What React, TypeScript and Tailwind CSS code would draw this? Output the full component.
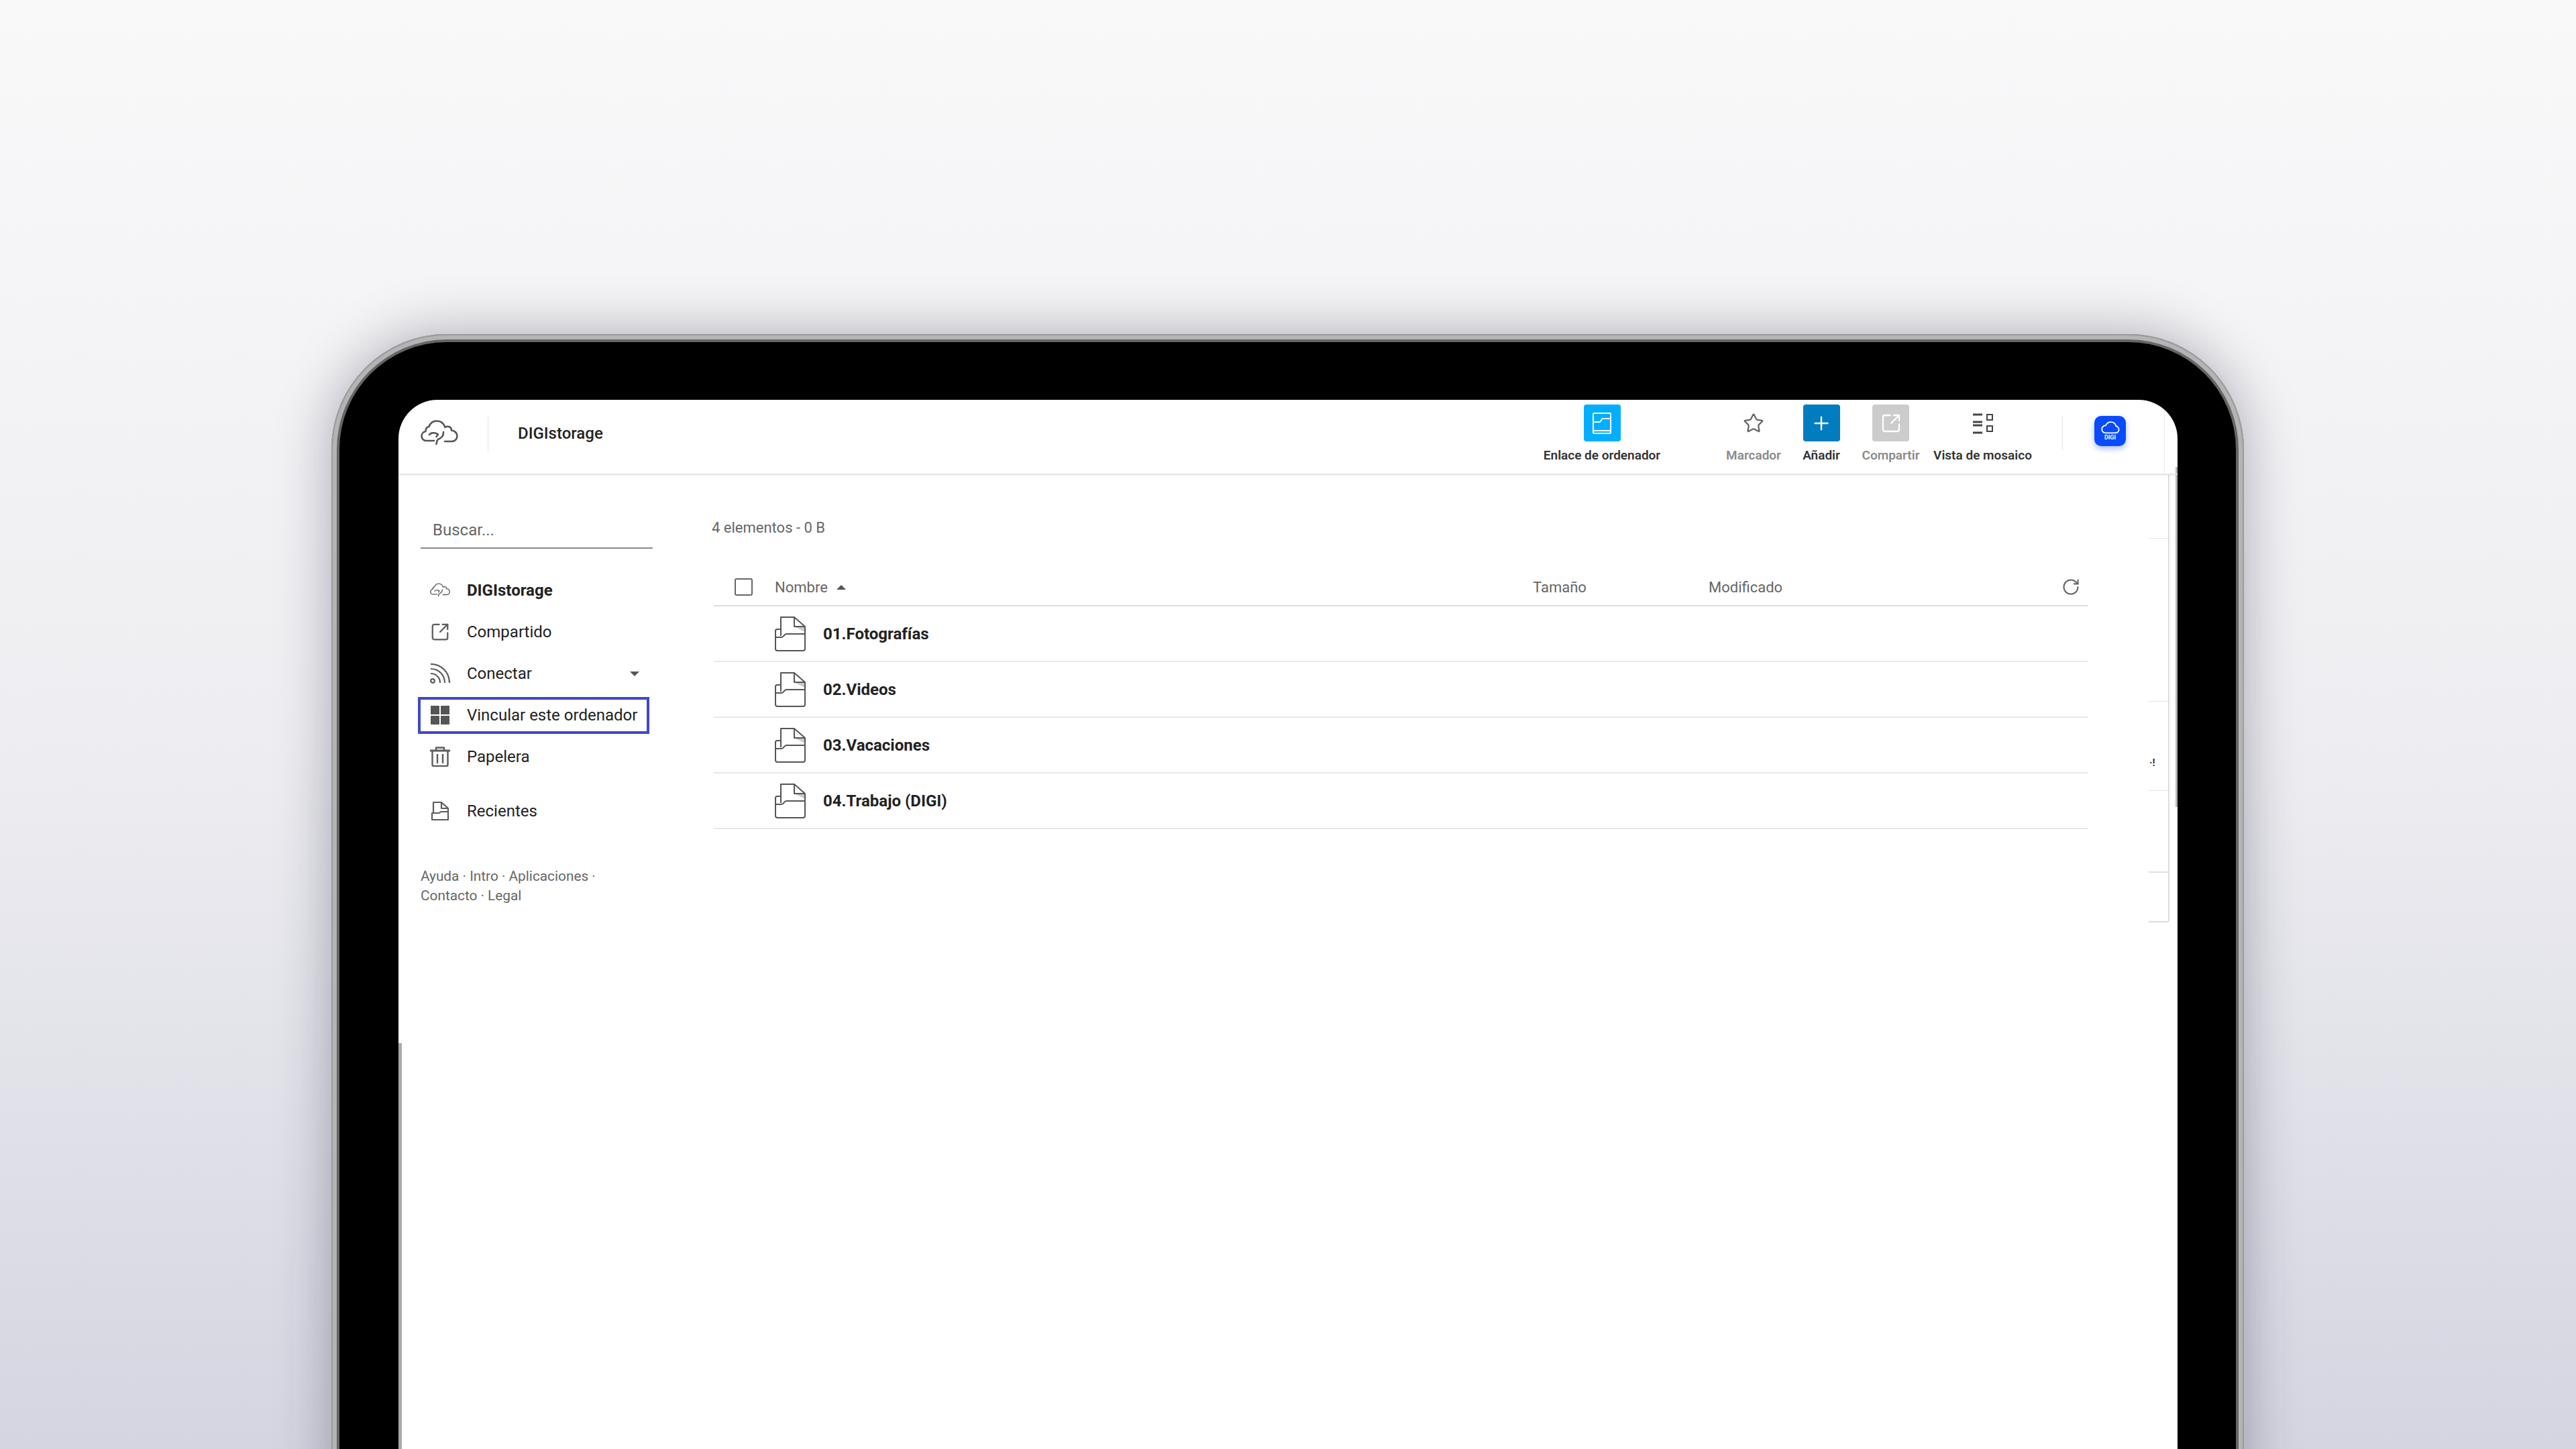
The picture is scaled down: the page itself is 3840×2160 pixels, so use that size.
import { Plus, RotateCw, SquareArrowOutUpRight, Star } from "lucide-react";

const FILES = ["01.Fotografías", "02.Videos", "03.Vacaciones", "04.Trabajo (DIGI)"];

function CloudLogo({ className }: { className: string }) {
  return (
    <svg viewBox="0 0 56 40" fill="none" stroke="currentColor" strokeWidth="2.6" strokeLinecap="round" strokeLinejoin="round" className={className}>
      <path d="M20 31H8.500C4 31 1.500 27.500 1.500 24c0-3.800 2.800-6.500 6-7C7.500 13 9 10.500 12.500 10 14.500 4.500 19 1.500 24 1.500c6 0 10.500 3.500 12.500 9.500C38 10 40 9.500 42 10c2.500.6 4 3 4 5.500 5 .5 8.500 4 8.500 8.500 0 4.500-3.500 8-8.500 8H36" />
      <path d="M13 22c2-3 8-4 13-.5l-2.500 3.500" />
      <path d="M34 18c.5 5-3 9-8 11l-1.500 2-1 5" />
    </svg>
  );
}

function FileIcon() {
  return (
    <svg viewBox="0 0 46 52" fill="none" stroke="#555" strokeWidth="2" strokeLinejoin="round" className="w-[46px] h-[52px]">
      <path d="M29 15l16 0v8z" fill="#c9c9c9" stroke="none" />
      <path d="M9 29V1h20l16 14v11" />
      <path d="M29 1v14h16" />
      <path d="M9 19H3.500A2.500 2.500 0 0 0 1 21.500V48a3 3 0 0 0 3 3h38a3 3 0 0 0 3-3V26H17c-3 0-3.500 5-7 5H1" />
    </svg>
  );
}

function ToolItem({ label, width, labelClass, children }: { label: string; width: string; labelClass: string; children: React.ReactNode }) {
  return (
    <div className={`flex flex-col items-center ${width}`}>
      <div className="h-[55px] flex items-center justify-center">{children}</div>
      <span className={`mt-[9px] text-[19px] leading-[24px] font-semibold whitespace-nowrap ${labelClass}`}>{label}</span>
    </div>
  );
}

function NavRow({ icon, label, bold, active, caret }: { icon: React.ReactNode; label: string; bold?: boolean; active?: boolean; caret?: boolean }) {
  return (
    <div className={`h-[55px] my-[3.5px] -ml-1 w-[345px] border-4 pl-[14px] flex items-center ${active ? "border-[#3f48cc]" : "border-transparent"}`}>
      <div className="w-[30px] flex justify-center text-[#5c5c5c]">{icon}</div>
      <span className={`ml-[25px] text-[24px] whitespace-nowrap text-[#222] ${bold ? "font-bold" : ""}`}>{label}</span>
      {caret && <span className="ml-auto mr-[11px] w-0 h-0 border-x-[7px] border-x-transparent border-t-[7px] border-t-[#555]" />}
    </div>
  );
}

export default function App() {
  return (
    <div className="w-[3840px] h-[2160px] overflow-hidden bg-gradient-to-b from-[#f9f9fa] via-[#eeeef2] to-[#d5d5e1] pt-[498px] pl-[494px] font-['Roboto',sans-serif]">
      {/* device frame */}
      <div className="w-[2851px] h-[1800px] rounded-t-[172px] bg-[#666] pt-3 px-3 shadow-[0_0_80px_rgba(40,40,60,0.36),inset_0_0_0_2px_#9c9c9c,inset_0_0_0_8px_#b4b4b4]">
        <div className="h-full rounded-t-[160px] bg-black pt-[86px] pl-[88px] pr-[87px]">
          {/* screen */}
          <div className="relative h-full rounded-t-[58px] bg-white overflow-hidden">
            <div className="absolute left-0 top-[959px] bottom-0 w-[5px] bg-[#a9a9b0]" />
            <div className="absolute right-0 top-[100px] h-[507px] w-[3px] bg-[#b5b5ba]" />
            <div className="absolute left-[2632px] top-0 h-[111px] w-px bg-[#e8e8e8]" />

            {/* leftover panel at the right edge */}
            <div className="absolute left-[2609px] top-[111px] w-[31px] h-[668px] border-r-2 border-t border-b-2 border-[#ddd] rounded-r-[3px] flex flex-col">
              <div className="h-[95px] border-b border-[#e4e4e4]" />
              <div className="h-[243px] border-b border-[#e4e4e4]" />
              <div className="h-[133px] border-b border-[#e4e4e4] relative">
                <span className="absolute left-[1px] top-[81px] text-[15px] leading-[20px] font-bold text-[#333]">·!</span>
              </div>
              <div className="h-[122px] border-b-2 border-[#e0e0e0]" />
            </div>

            {/* header */}
            <header className="relative h-[112px] border-b-2 border-[#e6e6e6] shadow-[0_1px_3px_rgba(0,0,0,0.06)] flex items-start pr-[77px]">
              <div className="h-full flex items-center pb-[10px]">
                <CloudLogo className="ml-[33px] w-[56px] h-[40px] text-[#555]" />
                <div className="ml-[44px] w-px h-[51px] bg-[#e2e2e2]" />
                <span className="ml-[44px] text-[24px] font-medium text-[#222]">DIGIstorage</span>
              </div>
              <div className="ml-auto flex items-start pt-[7px]">
                <ToolItem label="Enlace de ordenador" width="w-[176px]" labelClass="text-[#333]">
                  <div className="w-[55px] h-[55px] rounded-[4px] bg-[#03aeff] flex items-center justify-center">
                    <svg viewBox="0 0 28 32" fill="none" stroke="#fff" strokeWidth="2" className="w-[28px] h-[32px]">
                      <rect x="1" y="1" width="26" height="30" rx="1.500" />
                      <path d="M1 14h10c2 0 2-5 4-5h12" />
                      <path d="M1 27h26" />
                    </svg>
                  </div>
                </ToolItem>
                <div className="ml-[97px]">
                  <ToolItem label="Marcador" width="w-[82px]" labelClass="text-[#8a8a8a]">
                    <Star className="w-[32px] h-[32px] text-[#666]" strokeWidth={1.7} />
                  </ToolItem>
                </div>
                <div className="ml-[32px]">
                  <ToolItem label="Añadir" width="w-[56px]" labelClass="text-[#333]">
                    <div className="w-[55px] h-[55px] rounded-[4px] bg-[#017cbf] flex items-center justify-center">
                      <Plus className="w-[32px] h-[32px] text-white" strokeWidth={1.8} />
                    </div>
                  </ToolItem>
                </div>
                <div className="ml-[32px]">
                  <ToolItem label="Compartir" width="w-[87px]" labelClass="text-[#8a8a8a]">
                    <div className="w-[55px] h-[55px] rounded-[4px] bg-[#cccccc] flex items-center justify-center">
                      <SquareArrowOutUpRight className="w-[32px] h-[32px] text-white" strokeWidth={1.7} />
                    </div>
                  </ToolItem>
                </div>
                <div className="ml-[20px]">
                  <ToolItem label="Vista de mosaico" width="w-[147px]" labelClass="text-[#333]">
                    <svg viewBox="0 0 30 32" fill="none" stroke="#444" className="w-[30px] h-[32px]">
                      <path d="M0 3h14M0 14h14M0 19h14M0 30h14" strokeWidth="3" />
                      <rect x="21" y="3" width="8" height="8" strokeWidth="2" />
                      <rect x="21" y="20" width="8" height="8" strokeWidth="2" />
                    </svg>
                  </ToolItem>
                </div>
                <div className="ml-[45px] mt-[17px] w-px h-[51px] bg-[#e2e2e2]" />
                <div className="ml-[47px] mt-[17px] w-[47px] h-[45px] rounded-[10px] bg-[#0a4bff] shadow-[0_4px_8px_rgba(10,75,255,0.35)] flex flex-col items-center justify-center">
                  <svg viewBox="0 0 30 20" fill="none" stroke="#fff" strokeWidth="2" className="w-[28px] h-[19px]">
                    <path d="M7 18.500h16a5.500 5.500 0 0 0 1-10.900C23 3.500 19.500 1 15.500 1 12 1 9 3 7.500 6.500A6 6 0 0 0 7 18.500z" />
                  </svg>
                  <span className="text-[9px] leading-[11px] font-bold text-white">DIGI</span>
                </div>
              </div>
            </header>

            {/* body */}
            <div className="flex">
              <aside className="w-[467px] pl-[33px] shrink-0">
                <div className="mt-[64px] w-[346px] h-[46px] border-b-2 border-[#8a8a8a] pl-[18px] text-[24px] leading-[36px] text-[#666]">Buscar...</div>
                <nav className="mt-[31px] flex flex-col">
                  <NavRow bold label="DIGIstorage" icon={<CloudLogo className="w-[30px] h-[22px]" />} />
                  <NavRow label="Compartido" icon={<SquareArrowOutUpRight className="w-[32px] h-[32px]" strokeWidth={1.8} />} />
                  <NavRow caret label="Conectar" icon={
                    <svg viewBox="0 0 30 30" fill="none" stroke="currentColor" strokeWidth="2.200" className="w-[30px] h-[30px]">
                      <circle cx="4" cy="26" r="2.800" />
                      <path d="M1 15c8 0 14 6 14 14M1 8c12 0 21 9 21 21M1 1c16 0 28 12 28 28" />
                    </svg>
                  } />
                  <NavRow active label="Vincular este ordenador" icon={
                    <div className="grid grid-cols-2 gap-[2px] w-[28px] h-[28px]">
                      <div className="bg-[#555]" /><div className="bg-[#555]" /><div className="bg-[#555]" /><div className="bg-[#555]" />
                    </div>
                  } />
                  <NavRow label="Papelera" icon={
                    <svg viewBox="0 0 30 30" fill="none" stroke="currentColor" strokeWidth="2.400" strokeLinejoin="round" className="w-[30px] h-[30px]">
                      <path d="M0 6h30" strokeWidth="3" />
                      <path d="M9 5V1.500h12V5" />
                      <path d="M3.500 7v20a2 2 0 0 0 2 2h19a2 2 0 0 0 2-2V7" />
                      <path d="M11 11v14M19 11v14" />
                    </svg>
                  } />
                  <div className="mt-[19px] flex flex-col">
                    <NavRow label="Recientes" icon={
                      <svg viewBox="0 0 28 30" fill="none" stroke="currentColor" strokeWidth="2.200" strokeLinejoin="round" className="w-[28px] h-[30px]">
                        <path d="M4 17V2h12l10 9v5" />
                        <path d="M16 2v9h10" />
                        <path d="M2 18h10c2 0 2-2 4-2h10v12H2z" />
                      </svg>
                    } />
                  </div>
                </nav>
                <p className="mt-[52px] w-[300px] text-[20.8px] leading-[29px] text-[#666]">
                  Ayuda · Intro · Aplicaciones · Contacto · Legal
                </p>
              </aside>

              <main className="flex-1">
                <div className="mt-[67px] text-[22px] leading-[24px] text-[#666]">4 elementos - 0 B</div>
                <div className="mt-[49px] ml-[3px] w-[2049px]">
                  <div className="h-[56px] border-b-2 border-[#ddd] grid grid-cols-[1221px_262px_1fr] items-center text-[22px] text-[#666]">
                    <div className="flex items-center pl-[31px]">
                      <div className="w-[27px] h-[26px] border-2 border-[#666] rounded-[3px]" />
                      <span className="ml-[33px]">Nombre</span>
                      <span className="ml-[13px] w-0 h-0 border-x-[7px] border-x-transparent border-b-[7px] border-b-[#555]" />
                    </div>
                    <span>Tamaño</span>
                    <div className="flex items-center justify-between pr-[12px]">
                      <span>Modificado</span>
                      <RotateCw className="w-[28px] h-[28px] text-[#666]" strokeWidth={1.8} />
                    </div>
                  </div>
                  {FILES.map((name) => (
                    <div key={name} className="h-[83px] border-b-2 border-[#e8e8e8] flex items-center pl-[91px]">
                      <FileIcon />
                      <span className="ml-[26px] text-[24px] font-bold text-[#222]">{name}</span>
                    </div>
                  ))}
                </div>
              </main>
            </div>
          </div>
        </div>
      </div>
    </div>
  );
}
